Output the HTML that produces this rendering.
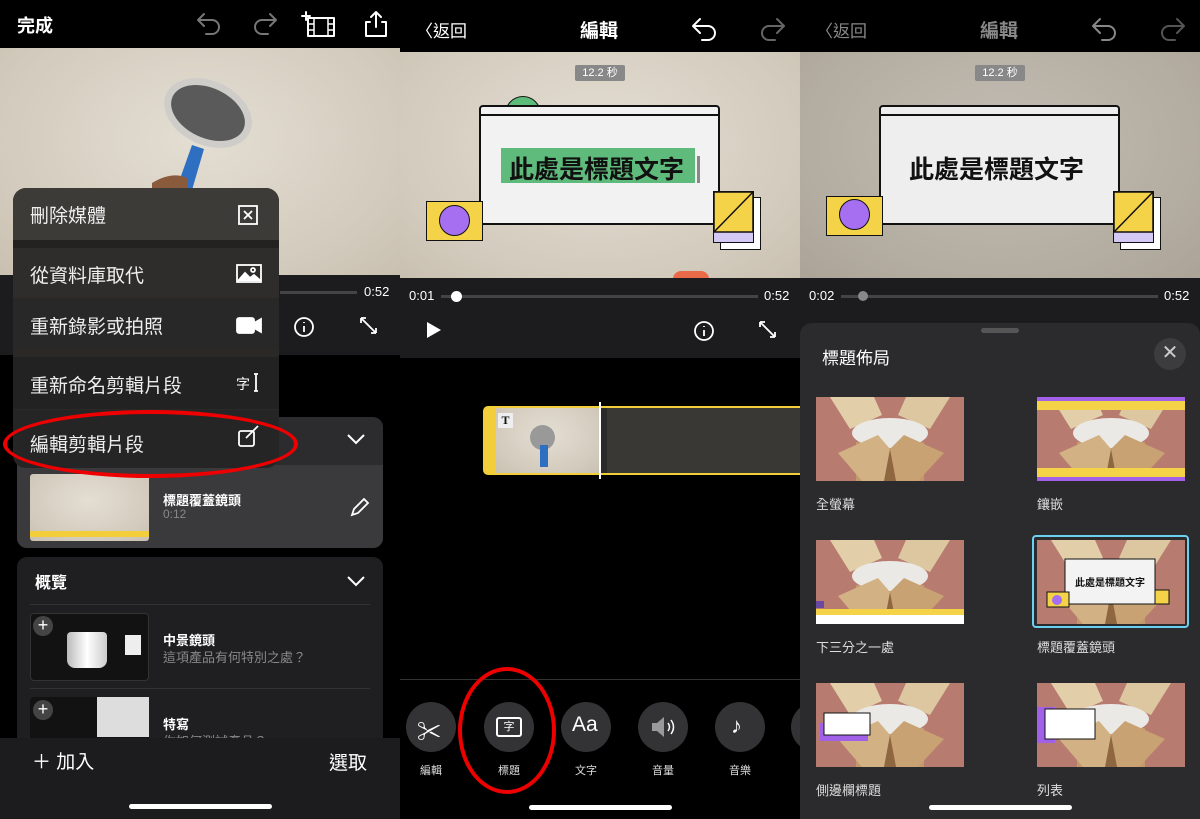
<!DOCTYPE html>
<html><head><meta charset="utf-8">
<style>
*{margin:0;padding:0;box-sizing:border-box}
body{width:1200px;height:819px;background:#000;position:relative;overflow:hidden;font-family:"Liberation Sans","Noto Sans CJK TC",sans-serif;color:#fff}
.a{position:absolute}
.t{position:absolute;white-space:nowrap}
.wall{background:radial-gradient(ellipse at 50% 40%,#e4ded3,#d3cbbd 70%,#c9c0b1)}
.circ{position:absolute;width:50px;height:50px;border-radius:50%;background:#333335}
.lbl{position:absolute;font-size:11px;color:#ddd;width:60px;text-align:center}
.th{position:absolute;width:148px;height:84px;overflow:hidden}
.cap{position:absolute;font-size:13px;color:#ddd}
.mi{position:absolute;left:13px;width:266px;font-size:19px;color:#eee;padding-left:17px;display:flex;align-items:center}
</style></head><body>

<svg width="0" height="0" style="position:absolute"><defs>
<symbol id="box" viewBox="0 0 148 84">
<rect width="148" height="84" fill="#b87b70"/>
<polygon points="14,0 58,0 66,18 34,32" fill="#e2cfa9"/>
<polygon points="90,0 134,0 114,32 82,18" fill="#dcc7a0"/>
<polygon points="40,84 40,45 108,45 108,84" fill="#c39a6c"/>
<ellipse cx="74" cy="36" rx="38" ry="15" fill="#ebe9e5"/>
<polygon points="22,56 62,38 74,52 74,84 46,84" fill="#d2b184"/>
<polygon points="74,52 88,38 128,56 102,84 74,84" fill="#c8a273"/>
<polygon points="74,52 68,84 80,84" fill="#8e6640"/>
</symbol>
</defs></svg>

<!-- ===== PANEL 1 ===== -->
<div class="a" style="left:0;top:0;width:400px;height:48px;background:#000"></div>
<div class="t" style="left:17px;top:12px;font-size:18px;font-weight:bold">完成</div>
<svg class="a" style="left:196px;top:10px" width="200" height="28" viewBox="0 0 200 28" fill="none" stroke-width="2" stroke-linecap="round" stroke-linejoin="round">
<path d="M8 4 L2 10 L8 16 M2 10 H16 a7 7 0 0 1 0 14 H10" stroke="#777"/>
<path d="M74 4 L80 10 L74 16 M80 10 H66 a7 7 0 0 0 0 14 H72" stroke="#777"/>
<rect x="112" y="8" width="26" height="18" stroke="#fff"/><path d="M118 8v18M132 8v18M112 14h6M112 20h6M132 14h6M132 20h6" stroke="#fff" stroke-width="1.5"/>
<path d="M110 2v8M106 6h8" stroke="#fff"/>
<path d="M174 12h-4v14h20v-14h-4M180 2v15M175 7l5-5 5 5" stroke="#fff"/>
</svg>
<div class="a wall" style="left:0;top:48px;width:400px;height:227px"></div>
<svg class="a" style="left:140px;top:65px" width="130" height="130" viewBox="0 0 130 130">
<ellipse cx="68" cy="48" rx="46" ry="32" fill="#cfcdc9" transform="rotate(25 68 48)"/>
<ellipse cx="68" cy="48" rx="39" ry="25" fill="#5a5a5a" transform="rotate(25 68 48)"/>
<path d="M52 80 L36 125 L52 125 L64 84Z" fill="#2f6fc1"/>
<path d="M12 118 q20 -12 35 -5 l0 17 l-35 0z" fill="#8a5a3c"/>
</svg>
<div class="a" style="left:0;top:275px;width:400px;height:80px;background:#1c1c1e"></div>
<div class="a" style="left:280px;top:291px;width:77px;height:3px;background:#444"></div>
<div class="t" style="left:364px;top:284px;font-size:13px">0:52</div>
<svg class="a" style="left:293px;top:316px" width="90" height="24" viewBox="0 0 90 24" fill="none" stroke="#fff" stroke-width="1.8"><circle cx="11" cy="11" r="9"/><path d="M11 10v6M11 6v1"/><path d="M68 2l15 15M68 2v5M68 2h5M83 17v-5M83 17h-5"/></svg>
<div class="a" style="left:17px;top:417px;width:366px;height:131px;border-radius:10px;background:#2c2c2e;overflow:hidden">
 <div class="a" style="left:0;top:48px;width:366px;height:83px;background:#3a3a3c"></div>
 <div class="a wall" style="left:13px;top:57px;width:119px;height:67px;border-radius:3px"></div>
 <div class="a" style="left:13px;top:114px;width:119px;height:6px;background:#f2cf3a"></div>
 <div class="t" style="left:146px;top:73px;font-size:13px;font-weight:bold">標題覆蓋鏡頭</div>
 <div class="t" style="left:146px;top:90px;font-size:12px;color:#888">0:12</div>
 <svg class="a" style="left:333px;top:80px" width="20" height="20" viewBox="0 0 20 20"><path d="M2 18l2-6L14 2l4 4L8 16z" fill="none" stroke="#fff" stroke-width="1.8"/></svg>
 <svg class="a" style="left:330px;top:16px" width="18" height="12"><path d="M1 2l8 8 8-8" fill="none" stroke="#fff" stroke-width="2"/></svg>
</div>
<div class="a" style="left:17px;top:557px;width:366px;height:200px;border-radius:10px;background:#1f1f21">
 <div class="t" style="left:18px;top:12px;font-size:16px;font-weight:bold">概覽</div>
 <svg class="a" style="left:330px;top:18px" width="18" height="12"><path d="M1 2l8 8 8-8" fill="none" stroke="#fff" stroke-width="2"/></svg>
 <div class="a" style="left:13px;top:47px;width:340px;height:1px;background:#333"></div>
 <div class="a" style="left:13px;top:56px;width:119px;height:68px;border-radius:4px;background:#121212;border:1px solid #333"></div>
 <div class="a" style="left:50px;top:75px;width:40px;height:36px;border-radius:4px 4px 8px 8px;background:linear-gradient(90deg,#bbb,#fff,#ccc)"></div>
 <div class="a" style="left:108px;top:78px;width:16px;height:20px;background:#eee"></div>
 <div class="a" style="left:16px;top:59px;width:20px;height:20px;border-radius:50%;background:#444;font-size:18px;line-height:18px;text-align:center">+</div>
 <div class="t" style="left:146px;top:73px;font-size:13px;font-weight:bold">中景鏡頭</div>
 <div class="t" style="left:146px;top:90px;font-size:13px;color:#888">這項產品有何特別之處？</div>
 <div class="a" style="left:13px;top:131px;width:340px;height:1px;background:#333"></div>
 <div class="a" style="left:13px;top:140px;width:119px;height:60px;border-radius:4px;background:#121212"></div>
 <div class="a" style="left:80px;top:140px;width:52px;height:40px;background:#ddd"></div>
 <div class="a" style="left:16px;top:143px;width:20px;height:20px;border-radius:50%;background:#444;font-size:18px;line-height:18px;text-align:center">+</div>
 <div class="t" style="left:146px;top:157px;font-size:13px;font-weight:bold">特寫</div>
 <div class="t" style="left:146px;top:174px;font-size:13px;color:#888">你如何測試產品？</div>
</div>
<div class="a" style="left:0;top:738px;width:400px;height:81px;background:#1c1c1e"></div>
<div class="t" style="left:32px;top:747px;font-size:19px">＋ 加入</div>
<div class="t" style="left:329px;top:748px;font-size:19px">選取</div>
<div class="a" style="left:129px;top:804px;width:143px;height:5px;border-radius:3px;background:#fff"></div>
<!-- menu -->
<div class="a" style="left:13px;top:188px;width:266px;height:280px;border-radius:13px;background:#2a2928;overflow:hidden">
 <div class="a" style="left:0;top:0;width:266px;height:52px;background:#3d3b38"></div>
 <div class="a" style="left:0;top:52px;width:266px;height:8px;background:#232221"></div>
 <div class="a" style="left:0;top:60px;width:266px;height:50px;background:#2e2d2c"></div>
 <div class="a" style="left:0;top:111px;width:266px;height:50px;background:#282828"></div>
 <div class="a" style="left:0;top:169px;width:266px;height:52px;background:#222"></div>
 <div class="a" style="left:0;top:222px;width:266px;height:58px;background:#252525"></div>
</div>
<div class="mi" style="top:188px;height:52px">刪除媒體</div>
<div class="mi" style="top:248px;height:52px">從資料庫取代</div>
<div class="mi" style="top:300px;height:50px">重新錄影或拍照</div>
<div class="mi" style="top:358px;height:52px">重新命名剪輯片段</div>
<div class="mi" style="top:414px;height:58px">編輯剪輯片段</div>
<svg class="a" style="left:236px;top:204px" width="28" height="260" viewBox="0 0 28 260" fill="none" stroke="#fff" stroke-width="1.8">
<rect x="3" y="2" width="18" height="18"/><path d="M8 7l8 8M16 7l-8 8"/>
<rect x="1" y="61" width="24" height="17"/><path d="M2 77l7-8 5 5 4-3 7 6" fill="#fff"/><circle cx="17" cy="66" r="2"/>
<rect x="1" y="114" width="17" height="15" rx="2" fill="#fff"/><path d="M18 119l7-4v13l-7-4z" fill="#fff"/>
<path d="M18 170h4M20 170v17M18 187h4"/>
<rect x="3" y="227" width="15" height="15" rx="2"/><path d="M10 234l12-12"/>
</svg>
<div class="t" style="left:236px;top:374px;font-size:14px">字</div>
<div class="a" style="left:3px;top:410px;width:295px;height:68px;border:4px solid #e00;border-radius:50%"></div>

<!-- ===== PANEL 2 ===== -->
<div class="t" style="left:416px;top:17px;font-size:17px">〈返回</div>
<div class="t" style="left:580px;top:16px;font-size:19px;font-weight:bold">編輯</div>
<svg class="a" style="left:690px;top:17px" width="100" height="26" viewBox="0 0 100 26" fill="none" stroke-width="2" stroke-linecap="round" stroke-linejoin="round">
<path d="M10 2L3 9l7 7M3 9h15a7 7 0 0 1 0 14h-6" stroke="#fff"/>
<path d="M87 2l7 7-7 7M94 9H79a7 7 0 0 0 0 14h6" stroke="#666"/>
</svg>
<div class="a wall" style="left:400px;top:52px;width:400px;height:226px"></div>
<div class="a" style="left:575px;top:65px;width:50px;height:16px;background:#888;border-radius:2px;font-size:11px;text-align:center;line-height:16px">12.2 秒</div>
<div class="a" style="left:505px;top:96px;width:36px;height:20px;border-radius:18px 18px 0 0;background:#5dbb7a;border:1.5px solid #111"></div>
<div class="a" style="left:479px;top:105px;width:241px;height:120px;background:#f2f2f2;border:2px solid #111;border-radius:4px"></div>
<div class="a" style="left:480px;top:114px;width:239px;height:2px;background:#111"></div>
<div class="a" style="left:501px;top:148px;width:194px;height:35px;background:#5fbb7b"></div>
<div class="t" style="left:509px;top:150px;font-size:25px;font-weight:bold;color:#111">此處是標題文字</div>
<div class="a" style="left:697px;top:156px;width:3px;height:27px;background:#888"></div>
<div class="a" style="left:426px;top:201px;width:57px;height:40px;background:#f5d349;border:1.5px solid #111"></div>
<div class="a" style="left:439px;top:205px;width:31px;height:31px;border-radius:50%;background:#a66ef0;border:1.5px solid #111"></div>
<div class="a" style="left:720px;top:197px;width:41px;height:53px;background:#fff;border:1.5px solid #111"></div>
<div class="a" style="left:713px;top:191px;width:41px;height:52px;background:#d4c8f4;border:1.5px solid #111"></div>
<svg class="a" style="left:713px;top:191px" width="41" height="42"><rect x="1" y="1" width="39" height="40" fill="#f5d349" stroke="#111" stroke-width="1.5"/><path d="M1 41L40 1" stroke="#111" stroke-width="1.5"/></svg>
<div class="a" style="left:673px;top:271px;width:36px;height:8px;border-radius:18px 18px 0 0;background:#e86a48"></div>
<div class="a" style="left:400px;top:278px;width:400px;height:80px;background:#1c1c1e"></div>
<div class="t" style="left:409px;top:288px;font-size:13px">0:01</div>
<div class="a" style="left:441px;top:295px;width:317px;height:3px;background:#444"></div>
<div class="a" style="left:451px;top:291px;width:11px;height:11px;border-radius:50%;background:#fff"></div>
<div class="t" style="left:764px;top:288px;font-size:13px">0:52</div>
<svg class="a" style="left:425px;top:320px" width="20" height="20"><path d="M2 2l14 8-14 8z" fill="#fff"/></svg>
<svg class="a" style="left:693px;top:320px" width="90" height="24" viewBox="0 0 90 24" fill="none" stroke="#fff" stroke-width="1.8"><circle cx="11" cy="11" r="9"/><path d="M11 10v6M11 6v1"/><path d="M67 2l15 15M67 2v5M67 2h5M82 17v-5M82 17h-5"/></svg>
<div class="a" style="left:483px;top:406px;width:317px;height:69px;border:2px solid #f2cf3a;border-right:none;border-radius:5px 0 0 5px;background:#2a2a2a"></div>
<div class="a" style="left:485px;top:408px;width:11px;height:65px;background:#f2cf3a"></div>
<div class="a wall" style="left:496px;top:408px;width:104px;height:65px"></div>
<div class="a" style="left:498px;top:413px;width:15px;height:15px;background:#eee;color:#111;font-size:12px;font-weight:bold;text-align:center;line-height:15px;font-family:'Liberation Serif',serif">T</div>
<div class="a" style="left:530px;top:425px;width:25px;height:25px;border-radius:50%;background:#999"></div>
<div class="a" style="left:540px;top:445px;width:8px;height:22px;background:#2f6fc1"></div>
<div class="a" style="left:607px;top:408px;width:193px;height:65px;background:#3a3835"></div>
<div class="a" style="left:599px;top:402px;width:2px;height:77px;background:#fff"></div>
<div class="a" style="left:400px;top:679px;width:400px;height:1px;background:#333"></div>
<div class="circ" style="left:406px;top:702px"></div>
<div class="circ" style="left:484px;top:702px"></div>
<div class="circ" style="left:561px;top:702px"></div>
<div class="circ" style="left:638px;top:702px"></div>
<div class="circ" style="left:715px;top:702px"></div>
<div class="circ" style="left:791px;top:702px"></div>
<div class="t" style="left:417px;top:712px;font-size:24px">✂</div>
<div class="a" style="left:496px;top:717px;width:26px;height:20px;border:2px solid #fff;border-radius:3px;font-size:11px;text-align:center;line-height:16px">字</div>
<div class="t" style="left:572px;top:713px;font-size:21px">Aa</div>
<svg class="a" style="left:650px;top:715px" width="28" height="24"><path d="M2 8h5l7-6v20l-7-6H2z" fill="#999"/><path d="M18 8q3 4 0 8M21 5q5 7 0 14" stroke="#fff" fill="none" stroke-width="1.5"/></svg>
<div class="t" style="left:731px;top:713px;font-size:22px">♪</div>
<div class="lbl" style="left:401px;top:762px">編輯</div>
<div class="lbl" style="left:479px;top:762px">標題</div>
<div class="lbl" style="left:556px;top:762px">文字</div>
<div class="lbl" style="left:633px;top:762px">音量</div>
<div class="lbl" style="left:710px;top:762px">音樂</div>
<div class="a" style="left:458px;top:667px;width:98px;height:127px;border:4px solid #e00;border-radius:50%"></div>
<div class="a" style="left:529px;top:805px;width:143px;height:5px;border-radius:3px;background:#fff"></div>

<!-- ===== PANEL 3 ===== -->
<div class="t" style="left:816px;top:17px;font-size:17px;color:#888">〈返回</div>
<div class="t" style="left:980px;top:16px;font-size:19px;font-weight:bold;color:#888">編輯</div>
<svg class="a" style="left:1090px;top:17px" width="100" height="26" viewBox="0 0 100 26" fill="none" stroke-width="2" stroke-linecap="round" stroke-linejoin="round">
<path d="M10 2L3 9l7 7M3 9h15a7 7 0 0 1 0 14h-6" stroke="#888"/>
<path d="M87 2l7 7-7 7M94 9H79a7 7 0 0 0 0 14h6" stroke="#555"/>
</svg>
<div class="a wall" style="left:800px;top:52px;width:400px;height:226px;opacity:.85"></div>
<div class="a" style="left:975px;top:65px;width:50px;height:16px;background:#888;border-radius:2px;font-size:11px;text-align:center;line-height:16px">12.2 秒</div>
<div class="a" style="left:879px;top:105px;width:241px;height:120px;background:#eee;border:2px solid #111;border-radius:4px"></div>
<div class="a" style="left:880px;top:114px;width:239px;height:2px;background:#111"></div>
<div class="t" style="left:909px;top:150px;font-size:25px;font-weight:bold;color:#111">此處是標題文字</div>
<div class="a" style="left:826px;top:196px;width:57px;height:40px;background:#f5d349;border:1.5px solid #111"></div>
<div class="a" style="left:839px;top:199px;width:31px;height:31px;border-radius:50%;background:#a66ef0;border:1.5px solid #111"></div>
<div class="a" style="left:1120px;top:197px;width:41px;height:53px;background:#fff;border:1.5px solid #111"></div>
<div class="a" style="left:1113px;top:191px;width:41px;height:52px;background:#d4c8f4;border:1.5px solid #111"></div>
<svg class="a" style="left:1113px;top:191px" width="41" height="42"><rect x="1" y="1" width="39" height="40" fill="#f5d349" stroke="#111" stroke-width="1.5"/><path d="M1 41L40 1" stroke="#111" stroke-width="1.5"/></svg>
<div class="a" style="left:800px;top:278px;width:400px;height:60px;background:#1c1c1e"></div>
<div class="t" style="left:809px;top:288px;font-size:13px">0:02</div>
<div class="a" style="left:841px;top:295px;width:317px;height:3px;background:#444"></div>
<div class="a" style="left:858px;top:291px;width:10px;height:10px;border-radius:50%;background:#888"></div>
<div class="t" style="left:1164px;top:288px;font-size:13px">0:52</div>
<div class="a" style="left:800px;top:323px;width:400px;height:496px;background:#2b2b2d;border-radius:12px 12px 0 0"></div>
<div class="a" style="left:981px;top:328px;width:38px;height:5px;border-radius:3px;background:#555"></div>
<div class="t" style="left:822px;top:344px;font-size:17px">標題佈局</div>
<div class="a" style="left:1154px;top:338px;width:32px;height:32px;border-radius:50%;background:#3c3c3e;font-size:20px;text-align:center;line-height:31px;color:#ccc">✕</div>
<svg class="th" style="left:816px;top:397px"><use href="#box"/></svg>
<svg class="th" style="left:1037px;top:397px"><use href="#box"/><rect width="148" height="4" fill="#a060e8"/><rect y="4" width="148" height="9" fill="#f5d349"/><rect y="71" width="148" height="9" fill="#f5d349"/><rect y="80" width="148" height="4" fill="#a060e8"/></svg>
<svg class="th" style="left:816px;top:540px"><use href="#box"/><rect y="69" width="148" height="6" fill="#f5d349"/><rect y="75" width="148" height="9" fill="#fff"/><rect x="0" y="61" width="8" height="7" fill="#6a4aa0"/></svg>
<svg class="th" style="left:1037px;top:540px"><use href="#box"/><rect x="28" y="19" width="90" height="45" fill="#f3f3f3" stroke="#111"/><rect x="10" y="52" width="22" height="15" fill="#f5d349" stroke="#111"/><circle cx="20" cy="60" r="5" fill="#a66ef0"/><rect x="118" y="50" width="14" height="14" fill="#f5d349" stroke="#111"/><text x="73" y="46" font-size="10" font-weight="bold" text-anchor="middle" fill="#111" font-family="Noto Sans CJK TC,sans-serif">此處是標題文字</text></svg>
<div class="a" style="left:1032px;top:535px;width:157px;height:93px;border:2px solid #6cd0f0;border-radius:4px"></div>
<svg class="th" style="left:816px;top:683px"><use href="#box"/><rect x="4" y="40" width="48" height="18" fill="#a060e8"/><rect x="8" y="30" width="46" height="22" fill="#fff" stroke="#111"/></svg>
<svg class="th" style="left:1037px;top:683px"><use href="#box"/><rect x="0" y="24" width="18" height="36" fill="#a060e8"/><rect x="8" y="26" width="50" height="30" fill="#fff" stroke="#111"/></svg>
<div class="cap" style="left:816px;top:494px">全螢幕</div>
<div class="cap" style="left:1037px;top:494px">鑲嵌</div>
<div class="cap" style="left:816px;top:637px">下三分之一處</div>
<div class="cap" style="left:1037px;top:637px">標題覆蓋鏡頭</div>
<div class="cap" style="left:816px;top:780px">側邊欄標題</div>
<div class="cap" style="left:1037px;top:780px">列表</div>
<div class="a" style="left:929px;top:805px;width:143px;height:5px;border-radius:3px;background:#fff"></div>
</body></html>
